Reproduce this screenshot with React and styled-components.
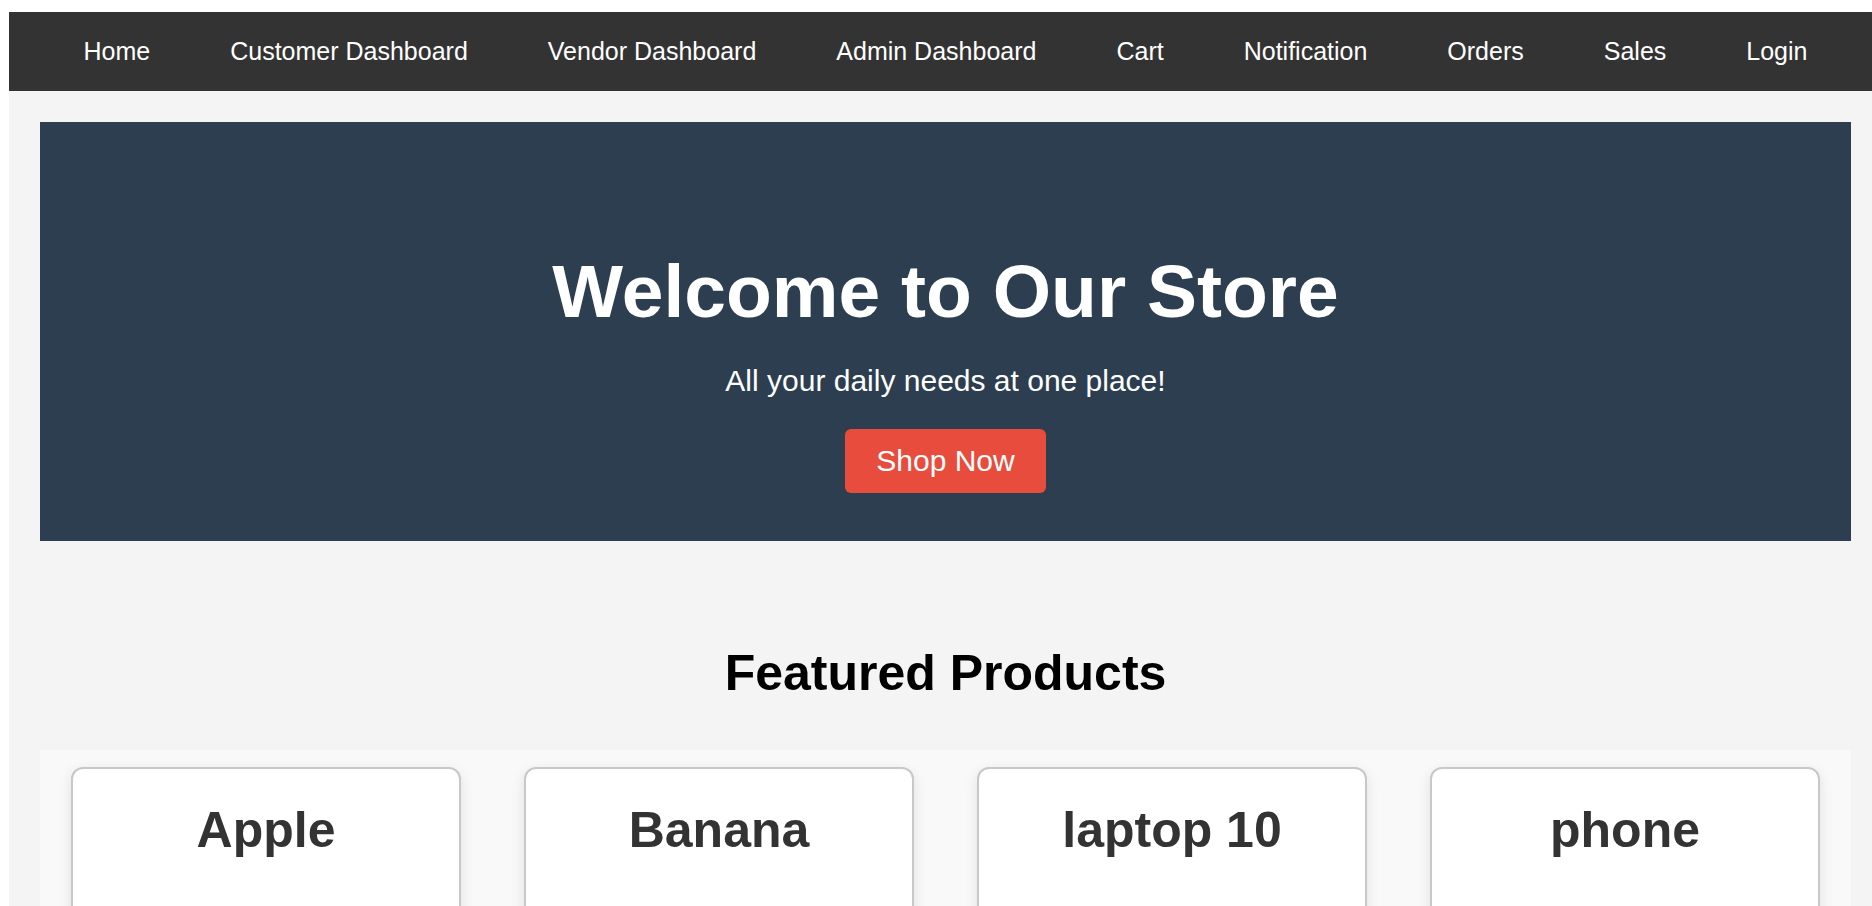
import React from 'react';
import styled, { createGlobalStyle } from 'styled-components';

const GlobalStyle = createGlobalStyle`
  html, body {
    margin: 0;
    padding: 0;
    overflow: hidden;
    background-color: #fff;
  }
  body {
    font-family: "Liberation Sans", Arial, sans-serif;
  }
`;

const Page = styled.div`
  margin: 12px 0 0 9px;
  width: 1873px;
  min-height: 900px;
  background-color: #f4f4f4;
`;

const NavBar = styled.nav`
  background-color: #333;
  display: flex;
  justify-content: center;
  padding: 25px 0;
`;

const NavLink = styled.a`
  color: #fff;
  font-size: 25px;
  line-height: normal;
  padding: 0 40px;
  text-decoration: none;
  cursor: pointer;
`;

const Main = styled.main`
  padding: 31px 31px 0;
`;

const Hero = styled.section`
  background-color: #2c3e50;
  color: #fff;
  text-align: center;
  padding: 126px 20px 48px;
`;

const HeroTitle = styled.h1`
  font-size: 75px;
  font-weight: bold;
  line-height: normal;
  margin: 0 0 30px;
`;

const HeroText = styled.p`
  font-size: 30px;
  line-height: normal;
  margin: 0 0 31px;
`;

const ShopButton = styled.button`
  background-color: #e74c3c;
  color: #fff;
  border: none;
  border-radius: 6px;
  padding: 15px 31px;
  font-family: inherit;
  font-size: 30px;
  line-height: normal;
  cursor: pointer;
`;

const SectionTitle = styled.h2`
  font-size: 50px;
  font-weight: bold;
  line-height: normal;
  color: #000;
  text-align: center;
  margin: 103px 0 48px;
`;

const ProductGrid = styled.div`
  background-color: #f9f9f9;
  display: grid;
  grid-template-columns: repeat(4, 1fr);
  gap: 63px;
  padding: 17px 31px 31px;
`;

const ProductCard = styled.div`
  background-color: #fff;
  border: 2px solid #c8c8c8;
  border-radius: 12px;
  box-shadow: 0 4px 14px rgba(0, 0, 0, 0.1);
  padding: 32px 20px;
  min-height: 360px;
  text-align: center;
`;

const ProductName = styled.h3`
  font-size: 50px;
  font-weight: bold;
  line-height: normal;
  color: #333;
  margin: 0;
`;

const links = ['Home', 'Customer Dashboard', 'Vendor Dashboard', 'Admin Dashboard', 'Cart', 'Notification', 'Orders', 'Sales', 'Login'];
const products = ['Apple', 'Banana', 'laptop 10', 'phone'];

const App = () => {
  return (
    <>
      <GlobalStyle />
      <Page>
        <NavBar>
          {links.map((link) => (
            <NavLink key={link}>{link}</NavLink>
          ))}
        </NavBar>
        <Main>
          <Hero>
            <HeroTitle>Welcome to Our Store</HeroTitle>
            <HeroText>All your daily needs at one place!</HeroText>
            <ShopButton>Shop Now</ShopButton>
          </Hero>
          <SectionTitle>Featured Products</SectionTitle>
          <ProductGrid>
            {products.map((name) => (
              <ProductCard key={name}>
                <ProductName>{name}</ProductName>
              </ProductCard>
            ))}
          </ProductGrid>
        </Main>
      </Page>
    </>
  );
};

export default App;
